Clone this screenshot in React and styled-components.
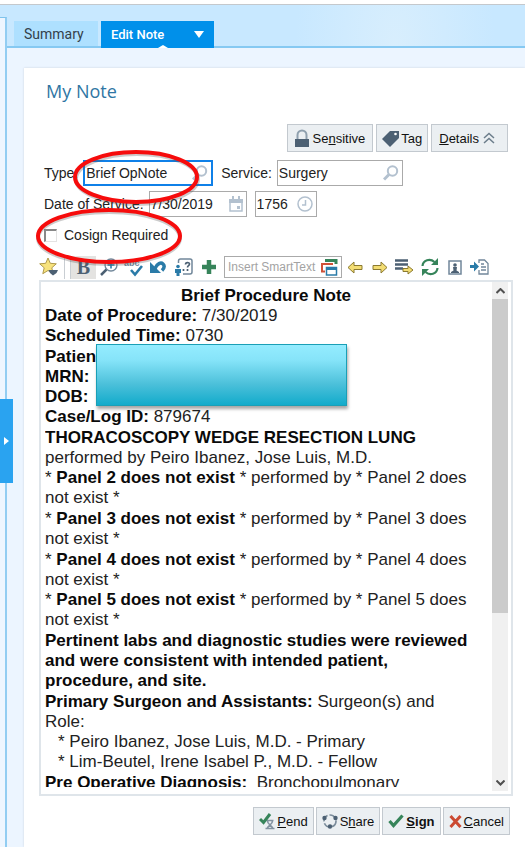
import React, { useState } from 'react'
import styled, { createGlobalStyle } from 'styled-components'

const GlobalStyle = createGlobalStyle`
  * {
    box-sizing: border-box;
  }
  body {
    margin: 0;
    background: #fff;
    color: #222;
    font-family: 'Liberation Sans', Arial, sans-serif;
    font-size: 14px;
  }
  button, input {
    font-family: inherit;
    color: inherit;
  }
`

const Container = styled.div`
  display: flex;
  height: 100vh;
  min-height: 600px;
  border-top: 4px solid #fff;
  background: radial-gradient(ellipse at 395px 44px, #d8eefd 0, rgba(216, 238, 253, 0) 100px)
      no-repeat,
    #c8e8ff;
  box-shadow: inset 0 1px #c4c8cc;
`
const Rail = styled.aside`
  position: relative;
  flex: none;
  width: 7px;
  margin-top: 13px;
  background: #eef6ff;
  border-top: 1px solid #7fc3ec;
  border-right: 2px solid #92cdf2;
`
const RailToggle = styled.button`
  position: absolute;
  left: 0;
  top: 46%;
  width: 13px;
  height: 84px;
  padding: 0;
  border: none;
  background: #2aa3f0;
  display: flex;
  align-items: center;
  justify-content: center;
  z-index: 1;
`
const Pane = styled.main`
  flex: 1;
  min-width: 0;
  display: flex;
  flex-direction: column;
`
const Tabs = styled.nav`
  flex: none;
  display: flex;
  align-items: flex-end;
  gap: 3px;
  height: 44px;
  padding-left: 7px;
  border-bottom: 2px solid #86c9f2;
`
const Tab = styled.button`
  position: relative;
  display: flex;
  align-items: center;
  justify-content: space-between;
  width: ${(p) => (p.$active ? '113px' : '84px')};
  height: ${(p) => (p.$active ? '27px' : '25px')};
  margin-bottom: ${(p) => (p.$active ? '-2px' : '0')};
  padding: 0 10px;
  border: none;
  background: ${(p) => (p.$active ? '#0090ea' : '#aee0ff')};
  color: ${(p) => (p.$active ? '#fff' : '#333f4a')};
  font-family: Roboto, sans-serif;
  font-size: ${(p) => (p.$active ? '13px' : '14px')};
  font-weight: ${(p) => (p.$active ? 500 : 400)};
`
const Notch = styled.span`
  position: absolute;
  left: 50%;
  bottom: 0;
  border: 5px solid transparent;
  border-top: none;
  border-bottom: 3px solid #fff;
`
const Body = styled.div`
  flex: 1;
  min-height: 0;
  display: flex;
  padding: 20px 0 0 17px;
  background: #ecf5ff;
`
const Card = styled.section`
  flex: 1;
  min-width: 0;
  display: flex;
  flex-direction: column;
  padding: 11px 12px 12px 15px;
  background: #fff;
  box-shadow: 0 0 2px #c9d3dd;
`
const Heading = styled.h1`
  margin: 0 0 21px 7px;
  font-family: 'Open Sans', sans-serif;
  font-size: 18px;
  line-height: 24px;
  font-weight: 400;
  color: #2f76a4;
`
const Actions = styled.div`
  flex: none;
  display: flex;
  justify-content: flex-end;
  gap: ${(p) => (p.$footer ? '2px' : '3px')};
  padding-right: ${(p) => (p.$footer ? '3px' : '5px')};
`
const ActionButton = styled.button`
  display: flex;
  align-items: center;
  gap: ${(p) => (p.$tight ? '2px' : '4px')};
  height: 28px;
  padding: ${(p) => (p.$tight ? '0 5px' : '0 7px')};
  border: 1px solid #c3c9cf;
  background: #ebeff2;
  font-size: 13px;
  color: #111;
  white-space: nowrap;
`
const DetailsButton = styled(ActionButton)`
  padding-right: 12px;
`
const Form = styled.form`
  position: relative;
  flex: none;
  display: flex;
  flex-direction: column;
  gap: 5px;
  padding: 8px 0 0 5px;
`
const FormRow = styled.div`
  display: flex;
  align-items: center;
  height: 26px;
`
const Label = styled.label`
  margin-right: 5px;
  white-space: nowrap;
`
const Field = styled.span`
  display: flex;
  align-items: center;
  width: ${(p) => p.$width};
  height: 26px;
  margin-right: 8px;
  padding-right: 3px;
  border: ${(p) => (p.$focused ? '2px solid #0f80e8' : '1px solid #aaa')};
  background: #fff;
`
const Input = styled.input`
  flex: 1;
  width: 0;
  min-width: 0;
  padding: 0 1px;
  border: none;
  outline: none;
  background: none;
  font-size: ${(p) => (p.$small ? '12px' : '14px')};
  &::placeholder {
    color: #a3a3a3;
    opacity: 1;
  }
`
const Checkbox = styled.input`
  appearance: none;
  width: 13px;
  height: 13px;
  margin: 0 7px 0 0;
  border: 1px solid #e3e3e3;
  border-top: 2px solid #888;
  border-left: 2px solid #888;
`
const Circles = styled.svg`
  position: absolute;
  left: -4px;
  top: -4px;
  pointer-events: none;
  z-index: 2;
`
const Toolbar = styled.div`
  flex: none;
  display: flex;
  align-items: center;
  height: 26px;
  margin-top: 6px;
`
const Tool = styled.button`
  flex: none;
  display: flex;
  align-items: center;
  justify-content: ${(p) => (p.$start ? 'flex-start' : 'center')};
  width: 25px;
  height: 23px;
  padding: 0;
  border: none;
  background: ${(p) => (p.$pressed ? '#e4e3e1' : 'none')};
`
const BoldGlyph = styled.b`
  font-family: 'Liberation Serif', serif;
  font-size: 20px;
  color: #4c6073;
`
const Divider = styled.span`
  width: 7px;
  height: 23px;
  border-left: 1px solid #c9ced3;
  border-right: 1px solid #c9ced3;
`
const SmartText = styled(Field)`
  width: 118px;
  height: 22px;
  margin: 0 0 0 3px;
  padding-left: 2px;
`
const Editor = styled.div`
  position: relative;
  flex: 1;
  min-height: 0;
  display: flex;
  padding: 0 3px 3px 0;
  margin-bottom: 11px;
  border: 2px solid #dfe5ea;
`
const Note = styled.article`
  flex: 1;
  min-width: 0;
  display: flex;
  flex-direction: column;
  gap: 1px;
  margin: 4px 0 4px 4px;
  overflow: hidden;
  font-size: 17px;
  line-height: 20px;
`
const Block = styled.div`
  flex: none;
`
const Line = styled.p`
  margin: 0;
  padding-left: ${(p) => (p.$indent ? '13px' : '0')};
  padding-right: 5px;
  text-align: ${(p) => (p.$center ? 'center' : 'left')};
  b {
    color: #0a0a0a;
  }
`
const Redaction = styled.div`
  position: absolute;
  left: 55px;
  top: 62px;
  width: 251px;
  height: 62px;
  border: 1px solid #1a9fb6;
  background: linear-gradient(#94ecff, #86e4f9 25%, #4cc0da 65%, #12abcb);
  box-shadow: 1px 3px 3px rgba(0, 0, 0, 0.35);
`
const Scrollbar = styled.div`
  flex: none;
  display: flex;
  flex-direction: column;
  width: 16px;
  background: #f0f0f0;
`
const ScrollArrow = styled.button`
  height: 17px;
  padding: 0;
  border: none;
  background: none;
  display: flex;
  align-items: center;
  justify-content: center;
`
const Track = styled.div`
  flex: 1;
`
const Thumb = styled.div`
  height: 66%;
  background: #cbcbcb;
`

const slate = '#4c6073'
const blue = '#2a7ba8'
const green = '#36845a'
const gold = '#f3dd73'
const pale = '#b3c1cf'

const Svg = ({ w = 16, h = 16, children }) => (
  <svg width={w} height={h} viewBox={`0 0 ${w} ${h}`} fill='none' aria-hidden='true'>
    {children}
  </svg>
)

const LockIcon = () => (
  <Svg w={14} h={19}>
    <path d='M2.5 11V6a4.5 4.5 0 0 1 9 0v5' stroke='#8fa0ae' strokeWidth='2' />
    <rect y='10' width='14' height='8' fill={slate} />
  </Svg>
)
const TagIcon = () => (
  <Svg w={17} h={17}>
    <path d='M0 9 8 1h9v7l-9 9Z' fill={slate} />
    <circle cx='13.5' cy='4' r='1.3' fill='#fff' />
  </Svg>
)
const UpIcon = () => (
  <Svg w={12} h={12}>
    <path d='m1 6 5-4.5L11 6M1 11l5-4.5L11 11' stroke='#6c7d8b' strokeWidth='1.5' />
  </Svg>
)
const LookupIcon = () => (
  <Svg w={16} h={16}>
    <circle cx='9.5' cy='6' r='4.7' stroke={pale} strokeWidth='2' />
    <path d='m6 9.5-5 5' stroke={pale} strokeWidth='3' />
  </Svg>
)
const CalendarIcon = () => (
  <Svg w={14} h={16}>
    <path d='M1 4.5h12V15H1Z' stroke={pale} strokeWidth='1.5' />
    <path d='M0 3h14v4H0ZM3 0h2v4H3ZM9 0h2v4H9ZM8 10h3v3H8Z' fill={pale} />
  </Svg>
)
const ClockIcon = () => (
  <Svg w={16} h={16}>
    <circle cx='8' cy='8' r='7' stroke={pale} strokeWidth='1.5' />
    <path d='M8.5 4v5H5' stroke={pale} strokeWidth='1.5' />
  </Svg>
)
const StarIcon = () => (
  <Svg w={20} h={20}>
    <path
      d='m9 1 2.3 5.3 6 .5-4.5 4 1.4 5.9L9 13.5l-5.2 3.2 1.4-5.9-4.5-4 6-.5Z'
      fill='#f7e27c'
      stroke='#b09a4c'
    />
    <path d='M9.5 13H19l-1.5 3-3.5 2.500-3-2.500Z' fill={slate} />
  </Svg>
)
const ZoomIcon = () => (
  <Svg w={18} h={18}>
    <circle cx='11' cy='7' r='6' stroke='#71879a' strokeWidth='1.3' />
    <path d='M6.5 11.5 1 17' stroke={slate} strokeWidth='2.5' />
    <path d='M11 3.5v7M7.5 7h7' stroke={blue} strokeWidth='1.6' />
  </Svg>
)
const SpellIcon = () => (
  <Svg w={19} h={19}>
    <text x='0' y='8' fontSize='9' fontWeight='700' fill='#71879a'>
      abc
    </text>
    <path d='m7 12 4 4.5L18 8' stroke={blue} strokeWidth='2.6' />
  </Svg>
)
const UndoIcon = () => (
  <Svg w={17} h={14}>
    <path d='M0 2v11h11Z' fill={blue} />
    <path d='M5 8.5C7 3.500 11 2 13 4c1.500 1.500 1.500 4-1 6.500' stroke={blue} strokeWidth='3.400' />
  </Svg>
)
const HelpIcon = () => (
  <Svg w={19} h={19}>
    <path
      d='M4.5 5V3a2 2 0 0 1 2-2H16a2 2 0 0 1 2 2v11a2 2 0 0 1-2 2H9'
      stroke='#71879a'
      strokeWidth='1.5'
    />
    <path
      d='M11.5 6.500c0-2.500 4-2.500 4-.5 0 1.700-2 1.700-2 3.500M13.500 11v2M9.500 11v2'
      stroke={slate}
      strokeWidth='1.7'
    />
    <circle cx='4' cy='8.500' r='1.800' fill={blue} />
    <path d='M1 11h6v4H5.500v3h-3v-3H1Z' fill={blue} />
  </Svg>
)
const PlusIcon = () => (
  <Svg w={14} h={14}>
    <path d='M7 0v14M0 7h14' stroke={green} strokeWidth='4.5' />
  </Svg>
)
const WindowsIcon = () => (
  <Svg w={17} h={17}>
    <path d='M4 1.5h11V5' stroke={green} strokeWidth='3' />
    <path d='M4 12.5H1V5h11' stroke='#cf5138' strokeWidth='2' />
    <path d='M5.5 8.5h10V16h-10Z' fill='#fff' stroke={blue} strokeWidth='1.5' />
    <path d='M5 8h11v3H5Z' fill={blue} />
  </Svg>
)
const ArrowIcon = ({ right }) => (
  <Svg w={16} h={13}>
    <path
      d={right ? 'M1 4.5h8V1l6 5.5L9 12V8.5H1Z' : 'M15 4.5H7V1L1 6.5 7 12V8.5h8Z'}
      fill={gold}
      stroke='#8b7a31'
    />
  </Svg>
)
const ListIcon = () => (
  <Svg w={19} h={16}>
    <path d='M0 1.5h13M0 5.5h13M0 9.5h8' stroke={slate} strokeWidth='2.6' />
    <path d='M8 9.5h5V7l5 4-5 4v-2.5H8Z' fill={gold} stroke='#8b7a31' />
  </Svg>
)
const RefreshIcon = () => (
  <Svg w={18} h={18}>
    <path
      d='M1.5 8C2 2 9 0 13.5 4M16.5 10C16 16 9 18 4.5 14'
      stroke={green}
      strokeWidth='2.2'
    />
    <path d='M17 0v7h-7ZM1 18v-7h7Z' fill={green} />
  </Svg>
)
const PersonIcon = () => (
  <Svg w={14} h={15}>
    <rect x='1' y='1' width='12' height='13' stroke='#71879a' strokeWidth='1.5' />
    <circle cx='7' cy='5' r='1.8' fill={slate} />
    <path d='M5 7h4l-.5 3.5L11 12v1H3v-1l2.5-1.5Z' fill={slate} />
  </Svg>
)
const ImportIcon = () => (
  <Svg w={19} h={16}>
    <path
      d='M9 4V1h5.5L18 4.5V15H9v-4M11 5h3M11 8h5M11 11h5'
      stroke='#71879a'
      strokeWidth='1.3'
    />
    <path d='M0 6h4V2.5L9 7.5l-5 5V9H0Z' fill={blue} />
  </Svg>
)
const PendIcon = () => (
  <Svg w={16} h={17}>
    <path
      d='M7.5 7.5h7M8.5 8c0 4 5 4 5 7.5M13.5 8c0 4-5 4-5 7.5M6.5 15.5h9'
      stroke='#8292a0'
      strokeWidth='1.6'
    />
    <path d='m1 6 3.5 3.5L11 1' stroke={green} strokeWidth='3' />
  </Svg>
)
const ShareIcon = () => (
  <Svg w={16} h={16}>
    <circle cx='8' cy='8' r='6' stroke='#7b8c9b' strokeWidth='1.7' strokeDasharray='7 2' />
    <circle cx='2.500' cy='5' r='2.200' fill={slate} />
    <circle cx='13.500' cy='5' r='2.200' fill={slate} />
    <circle cx='8' cy='13.500' r='2.200' fill={slate} />
  </Svg>
)
const SignIcon = () => (
  <Svg w={16} h={14}>
    <path d='m1.5 7 4 4.5L14.5 1.5' stroke={green} strokeWidth='3.2' />
  </Svg>
)
const CancelIcon = () => (
  <Svg w={13} h={13}>
    <path d='m1.5 1 10 11M11.5 1l-10 11' stroke='#cb4a32' strokeWidth='3' />
  </Svg>
)
const Chevron = ({ down }) => (
  <Svg w={9} h={6}>
    <path d={down ? 'm.5.5 4 4 4-4' : 'm.5 5 4-4 4 4'} stroke='#505050' strokeWidth='2' />
  </Svg>
)

const Panel = ({ n }) => (
  <Line>
    * <b>{`Panel ${n} does not exist`}</b>
    {` * performed by * Panel ${n} does`}
    <br />
    not exist *
  </Line>
)

function App() {
  const [type, setType] = useState('Brief OpNote')
  const [service, setService] = useState('Surgery')
  const [date, setDate] = useState('7/30/2019')
  const [time, setTime] = useState('1756')

  return (
    <Container>
      <GlobalStyle />
      <Rail>
        <RailToggle aria-label='Expand sidebar'>
          <Svg w={5} h={8}>
            <path d='m0 0 5 4-5 4Z' fill='#fff' />
          </Svg>
        </RailToggle>
      </Rail>
      <Pane>
        <Tabs>
          <Tab>Summary</Tab>
          <Tab $active>
            Edit Note
            <Svg w={10} h={7}>
              <path d='M0 0h10L5 7Z' fill='#fff' />
            </Svg>
            <Notch />
          </Tab>
        </Tabs>
        <Body>
          <Card>
            <Heading>My Note</Heading>
            <Actions>
              <ActionButton>
                <LockIcon />
                <span>
                  Se<u>n</u>sitive
                </span>
              </ActionButton>
              <ActionButton $tight>
                <TagIcon />
                <span>
                  Ta<u>g</u>
                </span>
              </ActionButton>
              <DetailsButton>
                <span>
                  <u>D</u>etails
                </span>
                <UpIcon />
              </DetailsButton>
            </Actions>
            <Form>
              <FormRow>
                <Label htmlFor='type'>Type:</Label>
                <Field $width='130px' $focused>
                  <Input id='type' value={type} onChange={(e) => setType(e.target.value)} />
                  <LookupIcon />
                </Field>
                <Label htmlFor='service'>Service:</Label>
                <Field $width='126px'>
                  <Input
                    id='service'
                    value={service}
                    onChange={(e) => setService(e.target.value)}
                  />
                  <LookupIcon />
                </Field>
              </FormRow>
              <FormRow>
                <Label htmlFor='date'>Date of Service:</Label>
                <Field $width='98px'>
                  <Input id='date' value={date} onChange={(e) => setDate(e.target.value)} />
                  <CalendarIcon />
                </Field>
                <Field $width='62px'>
                  <Input
                    aria-label='Time of service'
                    value={time}
                    onChange={(e) => setTime(e.target.value)}
                  />
                  <ClockIcon />
                </Field>
              </FormRow>
              <FormRow>
                <Checkbox type='checkbox' id='cosign' />
                <Label htmlFor='cosign'>Cosign Required</Label>
              </FormRow>
              <Circles width='170' height='124' fill='none' aria-hidden='true'>
                <g stroke='#555' strokeOpacity='0.3' strokeWidth='4'>
                  <ellipse cx='102' cy='31' rx='61' ry='25' />
                  <ellipse cx='74' cy='90' rx='71' ry='26' />
                </g>
                <g stroke='#f60c0c' strokeWidth='4'>
                  <ellipse cx='101' cy='29' rx='61' ry='25' />
                  <ellipse cx='74' cy='88' rx='71' ry='26' />
                </g>
              </Circles>
            </Form>
            <Toolbar>
              <Tool aria-label='Favorites' $start>
                <StarIcon />
              </Tool>
              <Divider />
              <Tool aria-label='Bold' $pressed>
                <BoldGlyph>B</BoldGlyph>
              </Tool>
              <Tool aria-label='Zoom'>
                <ZoomIcon />
              </Tool>
              <Tool aria-label='Check spelling'>
                <SpellIcon />
              </Tool>
              <Tool aria-label='Undo'>
                <UndoIcon />
              </Tool>
              <Tool aria-label='Help'>
                <HelpIcon />
              </Tool>
              <Tool aria-label='Add'>
                <PlusIcon />
              </Tool>
              <SmartText>
                <Input $small aria-label='Insert SmartText' placeholder='Insert SmartText' />
                <WindowsIcon />
              </SmartText>
              <Tool aria-label='Previous'>
                <ArrowIcon />
              </Tool>
              <Tool aria-label='Next'>
                <ArrowIcon right />
              </Tool>
              <Tool aria-label='Next field'>
                <ListIcon />
              </Tool>
              <Tool aria-label='Refresh'>
                <RefreshIcon />
              </Tool>
              <Tool aria-label='Patient'>
                <PersonIcon />
              </Tool>
              <Tool aria-label='Import'>
                <ImportIcon />
              </Tool>
            </Toolbar>
            <Editor>
              <Note>
                <Block>
                  <Line $center>
                    <b>Brief Procedure Note</b>
                  </Line>
                  <Line>
                    <b>Date of Procedure:</b> 7/30/2019
                  </Line>
                  <Line>
                    <b>Scheduled Time:</b> 0730
                  </Line>
                </Block>
                <Block>
                  <Line>
                    <b>Patien</b>
                  </Line>
                  <Line>
                    <b>MRN:</b>
                  </Line>
                  <Line>
                    <b>DOB:</b>
                  </Line>
                  <Line>
                    <b>Case/Log ID:</b> 879674
                  </Line>
                </Block>
                <Block>
                  <Line>
                    <b>THORACOSCOPY WEDGE RESECTION LUNG</b>
                  </Line>
                  <Line>performed by Peiro Ibanez, Jose Luis, M.D.</Line>
                  <Panel n={2} />
                </Block>
                <Block>
                  <Panel n={3} />
                </Block>
                <Block>
                  <Panel n={4} />
                  <Panel n={5} />
                </Block>
                <Block>
                  <Line>
                    <b>
                      Pertinent labs and diagnostic studies were reviewed
                      <br />
                      and were consistent with intended patient,
                      <br />
                      procedure, and site.
                    </b>
                  </Line>
                </Block>
                <Block>
                  <Line>
                    <b>Primary Surgeon and Assistants:</b> Surgeon(s) and
                    <br />
                    Role:
                  </Line>
                  <Line $indent>* Peiro Ibanez, Jose Luis, M.D. - Primary</Line>
                  <Line $indent>* Lim-Beutel, Irene Isabel P., M.D. - Fellow</Line>
                </Block>
                <Block>
                  <Line>
                    <b>Pre Operative Diagnosis:</b>&nbsp; Bronchopulmonary
                  </Line>
                </Block>
              </Note>
              <Scrollbar>
                <ScrollArrow aria-label='Scroll up'>
                  <Chevron />
                </ScrollArrow>
                <Track>
                  <Thumb />
                </Track>
                <ScrollArrow aria-label='Scroll down'>
                  <Chevron down />
                </ScrollArrow>
              </Scrollbar>
              <Redaction />
            </Editor>
            <Actions $footer>
              <ActionButton $tight>
                <PendIcon />
                <span>
                  <u>P</u>end
                </span>
              </ActionButton>
              <ActionButton $tight>
                <ShareIcon />
                <span>
                  S<u>h</u>are
                </span>
              </ActionButton>
              <ActionButton $tight>
                <SignIcon />
                <b>
                  <u>S</u>ign
                </b>
              </ActionButton>
              <ActionButton $tight>
                <CancelIcon />
                <span>
                  <u>C</u>ancel
                </span>
              </ActionButton>
            </Actions>
          </Card>
        </Body>
      </Pane>
    </Container>
  )
}

export default App
